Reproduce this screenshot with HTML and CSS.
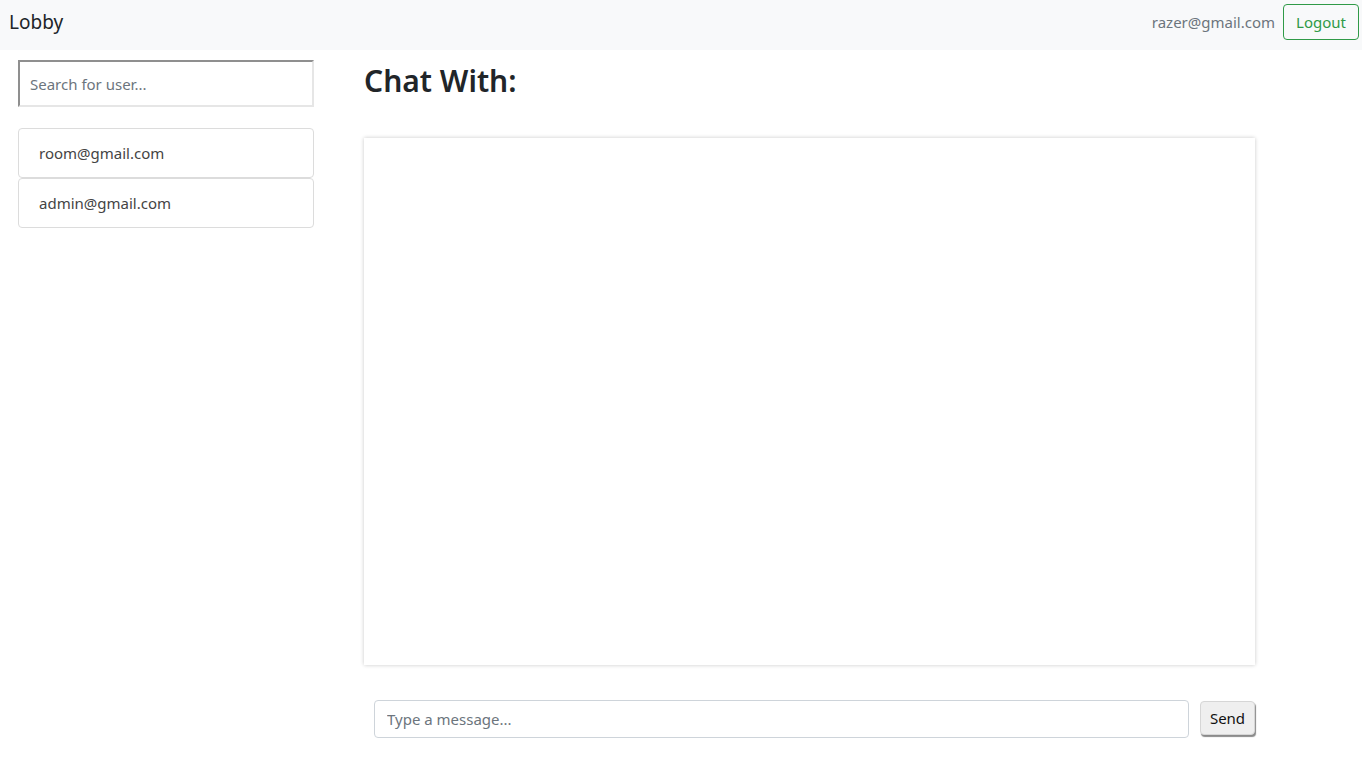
FILE: index.html
```html
<!DOCTYPE html>
<html lang="en">
<head>
<meta charset="utf-8">
<title>Lobby</title>
<link rel="stylesheet" href="styles.css">
</head>
<body>
<nav class="navbar">
  <span class="brand">Lobby</span>
  <div class="nav-right">
    <span class="user-email">razer@gmail.com</span>
    <button class="btn-logout">Logout</button>
  </div>
</nav>
<main class="layout">
  <aside class="sidebar">
    <input class="search" type="text" placeholder="Search for user...">
    <ul class="user-list">
      <li class="user-item">room@gmail.com</li>
      <li class="user-item">admin@gmail.com</li>
    </ul>
  </aside>
  <section class="chat">
    <h2 class="chat-title">Chat With:</h2>
    <div class="chat-box"></div>
    <div class="composer">
      <input class="message" type="text" placeholder="Type a message...">
      <button class="btn-send">Send</button>
    </div>
  </section>
</main>
</body>
</html>
```

FILE: styles.css
```css
* { box-sizing: border-box; }
html, body { margin: 0; padding: 0; }
body {
  font-family: "Noto Sans", "Open Sans", "Liberation Sans", sans-serif;
  font-size: 16px;
  color: #212529;
  background: #fff;
}
.navbar {
  height: 50px;
  background: #f8f9fa;
  display: flex;
  align-items: flex-start;
  justify-content: space-between;
  padding: 4px 3px 0 9px;
}
.brand {
  font-size: 19px;
  line-height: 36px;
  color: #212529;
}
.nav-right {
  display: flex;
  align-items: center;
  gap: 8px;
}
.user-email {
  color: #6c757d;
  font-size: 15px;
}
.btn-logout {
  font-family: inherit;
  font-size: 15px;
  height: 36px;
  width: 76px;
  padding: 0;
  color: #2f9a47;
  background: transparent;
  border: 1px solid #2f9a47;
  border-radius: 4px;
}
.layout {
  display: flex;
  gap: 50px;
  padding: 10px 0 0 18px;
}
.sidebar {
  width: 296px;
  flex: none;
}
.search {
  display: block;
  width: 100%;
  height: 47px;
  padding: 0 10px;
  font-family: inherit;
  font-size: 15px;
  border-width: 2px;
  border-style: solid;
  border-color: #8f8f8f #e6e6e6 #e6e6e6 #8f8f8f;
  outline: none;
}
.search::placeholder { color: #6c757d; }
.user-list {
  list-style: none;
  margin: 21px 0 0;
  padding: 0;
}
.user-item {
  height: 50px;
  display: flex;
  align-items: center;
  padding: 0 20px;
  border: 1px solid #dcdcdc;
  border-radius: 4px;
  color: #444;
  font-size: 15px;
}
.chat {
  width: 891px;
  flex: none;
}
.chat-title {
  margin: 2px 0 0;
  height: 76px;
  font-size: 30px;
  font-weight: 600;
  line-height: 38px;
  color: #212529;
}
.chat-box {
  height: 527px;
  background: #fff;
  box-shadow: 0 0 4px rgba(0,0,0,0.22);
}
.composer {
  display: flex;
  align-items: flex-start;
  gap: 11px;
  padding-left: 10px;
  margin-top: 35px;
}
.message {
  flex: 1;
  height: 38px;
  padding: 0 12px;
  font-family: inherit;
  font-size: 15px;
  border: 1px solid #ced4da;
  border-radius: 4px;
  outline: none;
}
.message::placeholder { color: #6c757d; }
.btn-send {
  flex: none;
  width: 55px;
  height: 34px;
  margin-top: 1px;
  font-family: inherit;
  font-size: 15px;
  color: #111;
  background: #efefef;
  border: 1px solid #d6d6d6;
  border-radius: 4px;
  box-shadow: 1px 2px 1px #8a8a8a;
  padding: 0;
}
```
